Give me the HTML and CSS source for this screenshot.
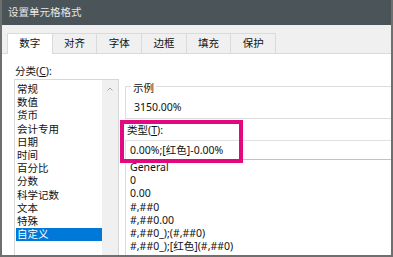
FILE: index.html
```html
<!DOCTYPE html>
<html lang="zh-CN">
<head>
    <meta charset="UTF-8">
    <meta name="viewport" content="width=device-width, initial-scale=1.0">
    <title>设置单元格格式</title>
    <link rel="stylesheet" href="styles.css">
</head>
<body>
    <div class="dialog">
        <div class="titlebar">设置单元格格式</div>

        <div class="tabs">
            <div class="tab active">数字</div>
            <div class="tab">对齐</div>
            <div class="tab">字体</div>
            <div class="tab">边框</div>
            <div class="tab">填充</div>
            <div class="tab">保护</div>
        </div>

        <div class="content">
            <div class="category">
                <div class="label">分类(<u>C</u>):</div>
                <div class="listbox">
                    <ul class="items">
                        <li>常规</li>
                        <li>数值</li>
                        <li>货币</li>
                        <li>会计专用</li>
                        <li>日期</li>
                        <li>时间</li>
                        <li>百分比</li>
                        <li>分数</li>
                        <li>科学记数</li>
                        <li>文本</li>
                        <li>特殊</li>
                        <li class="selected">自定义</li>
                    </ul>
                    <div class="scrollbar">
                        <svg width="6" height="4" viewBox="0 0 6 4">
                            <path d="M0.5 3.5 L3 1 L5.5 3.5" fill="none" stroke="#a6a6a6" stroke-width="1"/>
                        </svg>
                    </div>
                </div>
            </div>

            <div class="format">
                <div class="sample">
                    <div class="sample-title">示例</div>
                    <div class="sample-value">3150.00%</div>
                </div>

                <div class="label type-label">类型(<u>T</u>):</div>
                <div class="type-input">0.00%;[红色]-0.00%</div>

                <ul class="type-list">
                    <li>General</li>
                    <li>0</li>
                    <li>0.00</li>
                    <li>#,##0</li>
                    <li>#,##0.00</li>
                    <li>#,##0_);(#,##0)</li>
                    <li>#,##0_);[红色](#,##0)</li>
                </ul>

                <div class="callout"></div>
            </div>
        </div>
    </div>
</body>
</html>
```

FILE: styles.css
```css
body {
    margin: 0;
    font-family: "Noto Sans", "Noto Sans CJK SC", sans-serif;
    font-size: 10.5px;
    color: #111;
    background: #fff;
    overflow: hidden;
}

.dialog {
    width: 393px;
    height: 257px;
    box-sizing: border-box;
    border: 2px solid #6f6f6f;
    border-top: none;
    overflow: hidden;
    display: flex;
    flex-direction: column;
    background: #fff;
}

.titlebar {
    height: 25px;
    line-height: 25px;
    background: #4b5459;
    color: #e8e8e8;
    margin: 0 -2px;
    padding-left: 8px;
}

.tabs {
    display: flex;
    background: #f0f0f0;
    padding: 8px 0 0 5px;
    border-bottom: 1px solid #dadada;
    height: 20px;
}

.tab {
    width: 45.7px;
    box-sizing: border-box;
    height: 20px;
    line-height: 19px;
    text-align: center;
    border: 1px solid #dadada;
    border-bottom: none;
    margin-right: -1px;
}

.tab.active {
    background: #fff;
    height: 21px;
}

.content {
    flex: 1;
    display: flex;
    padding-left: 12px;
    gap: 6px;
}

.label {
    line-height: 14px;
}

.category {
    padding-top: 10px;
    width: 105px;
    flex-shrink: 0;
}

.category .label {
    padding-left: 1px;
    margin-bottom: 1px;
}

.listbox {
    display: flex;
    border: 1px solid #d7d7d7;
    height: 200px;
}

.items {
    list-style: none;
    margin: 0;
    padding: 3px 0 0;
    flex: 1;
}

.items li {
    line-height: 13.2px;
    margin-left: 1px;
    padding-left: 1px;
}

.items li.selected {
    background: #0078d7;
    color: #fff;
}

.scrollbar {
    width: 16px;
    background: #f0f0f0;
    display: flex;
    justify-content: center;
    padding-top: 7px;
    box-sizing: border-box;
}

.format {
    position: relative;
    width: 300px;
    flex-shrink: 0;
}

.sample {
    margin-top: 32px;
    border: 1px solid #dcdcdc;
    border-right: none;
    height: 31px;
}

.sample-title {
    width: fit-content;
    margin: -5px 0 0 5px;
    padding: 0 2px;
    line-height: 12px;
    background: #fff;
}

.sample-value {
    margin-top: 6px;
    padding-left: 8px;
    line-height: 14px;
}

.type-label {
    margin-top: 4px;
    padding-left: 2px;
}

.type-input {
    margin-top: 3px;
    height: 20px;
    box-sizing: border-box;
    border: 1px solid #e1e1e1;
    border-bottom-color: #c2c2c2;
    border-right: none;
    line-height: 18px;
    padding-left: 4px;
}

.type-list {
    list-style: none;
    margin: 0;
    padding: 1px 0 0 4px;
    border-left: 1px solid #dcdcdc;
    height: 120px;
}

.type-list li {
    line-height: 13.2px;
}

.callout {
    position: absolute;
    left: -5px;
    top: 66px;
    width: 123px;
    height: 43px;
    box-sizing: border-box;
    border: 4px solid #e3087f;
}
```
